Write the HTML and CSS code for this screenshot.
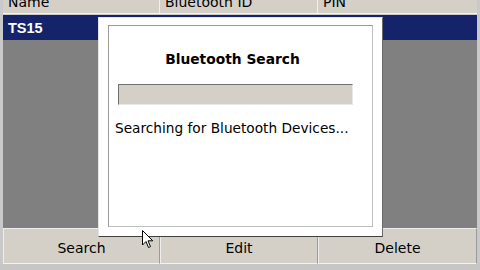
FILE: index.html
```html
<!DOCTYPE html>
<html>
<head>
<meta charset="utf-8">
<link rel="stylesheet" href="styles.css">
</head>
<body>
<div class="screen">
  <div class="header">
    <div class="hcell c1">Name</div>
    <div class="hcell c2">Bluetooth ID</div>
    <div class="hcell c3">PIN</div>
  </div>
  <div class="list">
    <div class="row selected"><span class="name">TS15</span></div>
  </div>
  <div class="buttons">
    <div class="btn b1">Search</div>
    <div class="btn b2">Edit</div>
    <div class="btn b3">Delete</div>
  </div>
  <div class="footer"></div>

  <div class="dialog">
    <div class="frame">
      <div class="title">Bluetooth Search</div>
      <div class="progress"></div>
      <div class="message">Searching for Bluetooth Devices...</div>
    </div>
  </div>

  <svg class="cursor" width="12" height="19" viewBox="0 0 12 19">
    <path d="M0.5 0.5 L0.5 15 L4 11.5 L6.5 17.5 L8.5 16.6 L6 10.8 L10.8 10.8 Z" fill="#fff" stroke="#000" stroke-width="1" stroke-linejoin="miter"/>
  </svg>
</div>
</body>
</html>
```
FILE: styles.css
```css
html, body {
  margin: 0;
  padding: 0;
}
body {
  width: 480px;
  height: 270px;
  overflow: hidden;
  background: #d4d0c8;
  font-family: "DejaVu Sans", Verdana, sans-serif;
}
.screen {
  position: relative;
  width: 480px;
  height: 270px;
  display: flex;
  flex-direction: column;
  background: #c9c9c9;
}
.header {
  height: 13px;
  display: flex;
  background: #d4d0c8;
  border-bottom: 1px solid #f4f4f4;
  margin: 0 3px;
  overflow: hidden;
}
.hcell {
  font-size: 14px;
  line-height: 14px;
  margin-top: -5px;
  padding-left: 5px;
  color: #000;
  border-right: 1px solid #f0f0f0;
  box-sizing: border-box;
}
.c1 { width: 157px; }
.c2 { width: 158px; }
.c3 { flex: 1; border-right: none; }
.list {
  flex: 1;
  background: #808080;
  margin: 1px 3px 0;
}
.row {
  height: 25px;
  display: flex;
  align-items: center;
}
.selected {
  background: #15246a;
  color: #fff;
}
.name {
  padding-left: 5px;
  font-family: "Liberation Sans", Arial, sans-serif;
  font-weight: bold;
  font-size: 14.5px;
}
.buttons {
  height: 36px;
  display: flex;
  margin: 0 3px;
  background: #d4d0c8;
}
.btn {
  display: flex;
  align-items: center;
  justify-content: center;
  font-size: 14px;
  color: #000;
  border-top: 1px solid #eeeeee;
  border-left: 1px solid #eeeeee;
  border-right: 1px solid #9a9a9a;
  border-bottom: 1px solid #f2f2f2;
  box-sizing: border-box;
  padding-top: 4px;
}
.b1 { width: 157px; }
.b2 { width: 158px; }
.b3 { flex: 1; }
.footer {
  height: 6px;
  background: #c6c6c6;
}
.dialog {
  position: absolute;
  left: 98px;
  top: 17px;
  width: 285px;
  height: 220px;
  box-sizing: border-box;
  background: #fff;
  border-left: 1px solid #e4e4e4;
  border-top: 1px solid #e4e4e4;
  border-right: 1px solid #6a6a6a;
  border-bottom: 1px solid #404040;
  padding: 7px 9px 9px 9px;
  display: flex;
}
.frame {
  flex: 1;
  border-top: 1px solid #9a9a9a;
  border-left: 1px solid #9a9a9a;
  border-right: 1px solid #c0c0c0;
  border-bottom: 1px solid #c0c0c0;
  display: flex;
  flex-direction: column;
  align-items: stretch;
  padding: 0 9px 0 6px;
}
.title {
  text-align: center;
  font-weight: bold;
  font-size: 13.8px;
  line-height: 16px;
  margin-top: 25px;
  padding-right: 13px;
}
.progress {
  height: 21px;
  box-sizing: border-box;
  margin: 17px 10px 0 3px;
  background: #d4d0c8;
  border-top: 1px solid #707070;
  border-left: 1px solid #707070;
  border-right: 1px solid #e8e8e8;
  border-bottom: 1px solid #e8e8e8;
}
.message {
  margin-top: 15px;
  font-size: 13.7px;
  line-height: 16px;
  white-space: nowrap;
}
.cursor {
  position: absolute;
  left: 142px;
  top: 230px;
}
```
